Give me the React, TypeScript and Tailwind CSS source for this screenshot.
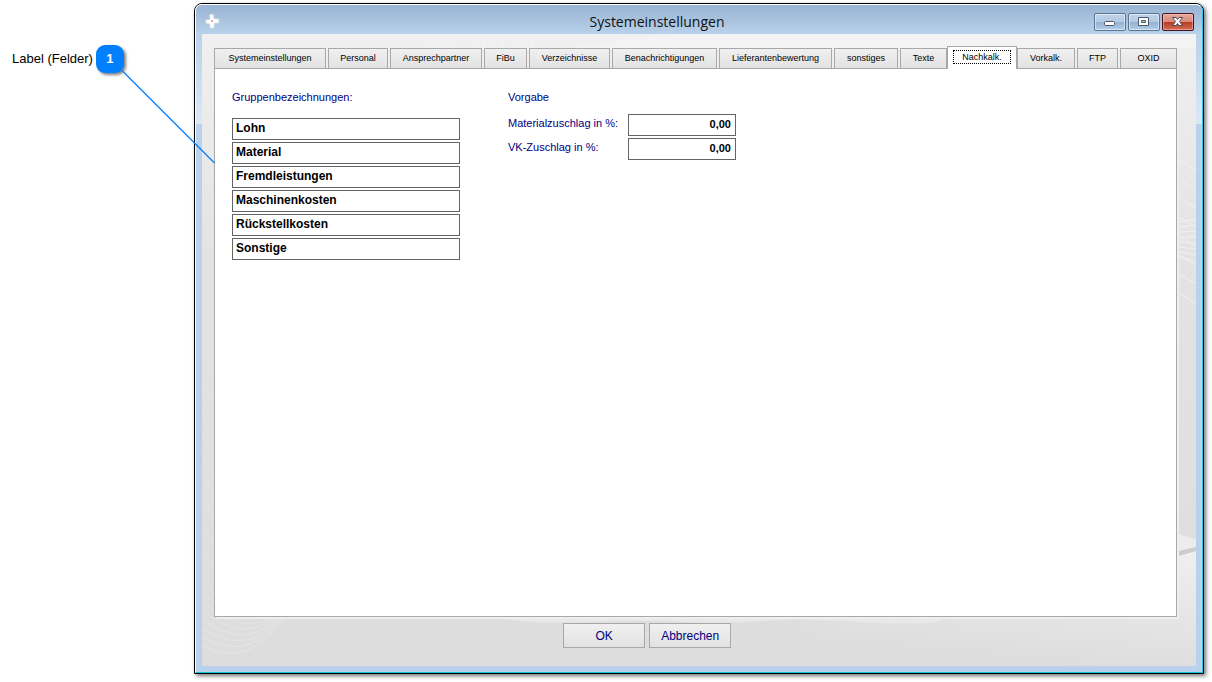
import React, { useState } from 'react';
import clsx from 'clsx';

const tabs = [
  'Systemeinstellungen',
  'Personal',
  'Ansprechpartner',
  'FiBu',
  'Verzeichnisse',
  'Benachrichtigungen',
  'Lieferantenbewertung',
  'sonstiges',
  'Texte',
  'Nachkalk.',
  'Vorkalk.',
  'FTP',
  'OXID',
];

const groups = [
  'Lohn',
  'Material',
  'Fremdleistungen',
  'Maschinenkosten',
  'Rückstellkosten',
  'Sonstige',
];

const surcharges = [
  { id: 'material', label: 'Materialzuschlag in %:' },
  { id: 'vk', label: 'VK-Zuschlag in %:' },
];

const App = () => {
  const [activeTab, setActiveTab] = useState('Nachkalk.');

  return (
    <div className="relative flex min-h-screen bg-white pt-[3px] pr-2 pb-2 font-['Liberation_Sans',Arial,sans-serif] text-black">
      <Callout />
      <div className="flex min-w-0 flex-1 flex-col rounded-t-lg border border-black bg-[#b9d1ea] shadow-[2px_2px_4px_rgba(0,0,0,0.55)]">
        <div className="flex flex-1 flex-col rounded-t-[7px] border-t border-l border-r border-b border-t-white border-l-white border-r-[#2fc6ee] border-b-[#12c4dc]">
          <TitleBar />
          <div className="flex flex-1 bg-[linear-gradient(to_bottom,#b9d1ea,#dce8f6_90px,#b9d1ea_90px)] px-1.5">
            <main className="relative flex min-w-0 flex-1 flex-col bg-[linear-gradient(to_bottom,#f0f0f0,#e3e3e3_35%,#dddddd)] px-3 pt-3.5">
              <Backdrop />
              <div
                role="tablist"
                className="relative z-10 mr-[7px] grid h-5 grid-cols-[112fr_60fr_92fr_43fr_81fr_105fr_113fr_64fr_47fr_66fr_58fr_41fr_57fr] gap-0.5"
              >
                {tabs.map((tab) => (
                  <Tab
                    key={tab}
                    label={tab}
                    active={tab === activeTab}
                    onClick={() => setActiveTab(tab)}
                  />
                ))}
              </div>
              <div className="relative mr-[7px] flex flex-1 items-start gap-12 border border-[#a8a8a8] bg-white px-[17px] pt-5 text-[11px] text-[#000080] shadow-[2px_2px_0_#efefef]">
                <fieldset className="w-[228px]">
                  <legend className="leading-4">Gruppenbezeichnungen:</legend>
                  <div className="mt-[13px] flex flex-col gap-0.5">
                    {groups.map((group) => (
                      <input
                        key={group}
                        type="text"
                        aria-label={group}
                        defaultValue={group}
                        className="h-[22px] w-full border border-[#646464] bg-white px-[3px] pb-0.5 text-xs font-bold text-black outline-none"
                      />
                    ))}
                  </div>
                </fieldset>
                <fieldset>
                  <legend className="leading-4">Vorgabe</legend>
                  <div className="mt-[9px] flex flex-col gap-0.5">
                    {surcharges.map(({ id, label }) => (
                      <div key={id} className="flex">
                        <label htmlFor={id} className="w-[120px] pt-px leading-4">
                          {label}
                        </label>
                        <input
                          id={id}
                          type="text"
                          defaultValue="0,00"
                          className="h-[22px] w-[108px] border border-[#646464] bg-white px-1 pb-0.5 text-right font-bold text-black outline-none"
                        />
                      </div>
                    ))}
                  </div>
                </fieldset>
              </div>
              <div className="relative mr-[7px] flex gap-1 pt-1.5 pb-[18px] pl-[36%]">
                <DialogButton label="OK" />
                <DialogButton label="Abbrechen" />
              </div>
            </main>
          </div>
          <div className="h-1.5" />
        </div>
      </div>
    </div>
  );
};

const Callout = () => {
  return (
    <aside className="w-[194px] shrink-0 pt-[42px] pl-3">
      <div className="flex items-center gap-[3px]">
        <span className="text-[13px] whitespace-nowrap">Label (Felder)</span>
        <span className="flex h-7 w-7 items-center justify-center rounded-[9px] bg-[#0080ff] text-[13px] font-bold text-white shadow-[2px_2px_3px_rgba(0,0,0,0.5)]">
          1
        </span>
      </div>
      <svg
        className="pointer-events-none absolute top-0 left-0 z-20"
        width="220"
        height="170"
        fill="none"
      >
        <path d="M122 70.500L214.500 163" stroke="#0080ff" strokeWidth="1.200" />
      </svg>
    </aside>
  );
};

const TitleBar = () => {
  return (
    <header className="relative flex h-[29px] items-start justify-between rounded-t-[6px] bg-linear-to-b from-[#98b4d2] to-[#b9d1ea] px-2">
      <svg className="mt-2" width="16" height="16" viewBox="0 0 16 16">
        <path
          d="M5.500 1.500l4-.500.500 4.500 5 .500v4l-4.500.500-.500 4.500-4 .500-.500-4.500-4-.500.500-4h4z"
          fill="#fff"
          stroke="#c8d4dc"
        />
        <circle cx="8" cy="8" r="1" fill="#e8906a" />
      </svg>
      <h1 className="absolute top-[7px] right-[84px] left-0 text-center font-['Open_Sans','Noto_Sans',sans-serif] text-sm leading-5 text-[#111]">
        Systemeinstellungen
      </h1>
      <div className="flex gap-0.5 pt-2">
        <WindowButton label="Minimieren">
          <rect x="10.500" y="8.500" width="10" height="4" rx="1" fill="#fff" stroke="#4c566a" />
        </WindowButton>
        <WindowButton label="Maximieren">
          <path
            d="M10.500 4.500h10v8h-10zM13.500 7.500v2h4v-2z"
            fill="#fff"
            fillRule="evenodd"
            stroke="#4c566a"
          />
        </WindowButton>
        <WindowButton label="Schließen" close>
          <path
            d="M10.500 4.500h3.500l1.500 2 1.500-2h3.500l-3 4 3 4h-3.500l-1.500-2-1.500 2h-3.500l3-4z"
            fill="#fff"
            stroke="#4c4a5a"
          />
        </WindowButton>
      </div>
    </header>
  );
};

const WindowButton = ({ label, close, children }: any) => {
  return (
    <button
      type="button"
      aria-label={label}
      className={clsx(
        'h-[18px] w-8 rounded-[2px] border',
        close
          ? 'border-[#4a1424] bg-[linear-gradient(to_bottom,#e4a89e,#d98a7c_48%,#b83820_50%,#d07058)] shadow-[inset_0_0_0_1px_rgba(255,200,190,0.5)]'
          : 'border-[#5c7391] bg-[linear-gradient(to_bottom,#c0d4ea,#b4cae2_48%,#94b0d0_50%,#b4cee8)] shadow-[inset_0_0_0_1px_rgba(255,255,255,0.5)]'
      )}
    >
      <svg className="-mt-px -ml-px block" width="32" height="18">
        {children}
      </svg>
    </button>
  );
};

const Tab = ({ label, active, onClick }: any) => {
  return (
    <button
      type="button"
      role="tab"
      aria-selected={active}
      onClick={onClick}
      className={clsx(
        'flex items-center justify-center border border-b-0 border-[#a8a8a8] text-[9px] whitespace-nowrap',
        active
          ? '-mx-0.5 -mt-0.5 -mb-px bg-white pb-0.5'
          : 'bg-linear-to-b from-[#f0f0f0] to-[#e2e2e2]'
      )}
    >
      {active ? (
        <span className="border border-dotted border-black px-2 leading-3">
          {label}
        </span>
      ) : (
        label
      )}
    </button>
  );
};

const DialogButton = ({ label }: any) => {
  return (
    <button
      type="button"
      className="h-[25px] w-[82px] border border-[#a8a8a8] bg-linear-to-b from-[#f0f0f0] to-[#e2e2e2] text-xs text-[#000080]"
    >
      {label}
    </button>
  );
};

const Backdrop = () => {
  const rings = [0, 1, 2, 3, 4, 5, 6, 7];
  const rays = [0, 1, 2, 3, 4, 5, 6, 7, 8, 9, 10, 11];

  return (
    <svg
      className="absolute inset-0 h-full w-full"
      viewBox="0 0 994 632"
      preserveAspectRatio="none"
      fill="none"
    >
      <defs>
        <linearGradient id="corner" x1="1" y1="0" x2="0.700" y2="1">
          <stop offset="0" stopColor="#f0f0f0" />
          <stop offset="1" stopColor="#dddddd" />
        </linearGradient>
      </defs>
      <path d="M600 632V583L977 520L994 511V632z" fill="url(#corner)" />
      <path d="M977 500L994 506V513L977 517z" fill="#ececec" />
      <path d="M977 517L994 513V517L977 522z" fill="#cccccc" />
      <path d="M370 14Q430 3 480 0H994V14z" fill="#f3f3f3" />
      <g stroke="#f6f6f6" opacity="0.800">
        {rays.map((i) => (
          <path key={i} d={`M${218 + i * 10} 0l${8 - i / 2} 14`} />
        ))}
        {rays.map((i) => (
          <path key={i} d={`M${400 + i * 9} 0l${5 - i} 14`} />
        ))}
        {rays.map((i) => (
          <path key={i} d={`M${735 + i * 4} 0l6 14`} />
        ))}
      </g>
      <g stroke="#e6e6e6">
        {rings.map((i) => (
          <path key={i} d={`M0 ${612 - i * 9}Q40 ${632 - i * 6} 70 ${598 - i * 3}T88 583`} />
        ))}
        {rings.map((i) => (
          <path key={i} d={`M0 ${350 + i * 24}q5 4 12 14`} />
        ))}
      </g>
      <g stroke="#f0f0f0">
        {rings.map((i) => (
          <path key={i} d={`M977 ${126 + i * 19}l17 10`} />
        ))}
        {rings.map((i) => (
          <path key={i} d={`M977 ${188 + i * 5}l17 ${i - 3}`} />
        ))}
      </g>
      <path
        d="M300 583Q340 588 390 586T480 586T560 585T660 586T740 584"
        stroke="#e8e8e8"
        strokeWidth="4"
      />
    </svg>
  );
};

export default App;
